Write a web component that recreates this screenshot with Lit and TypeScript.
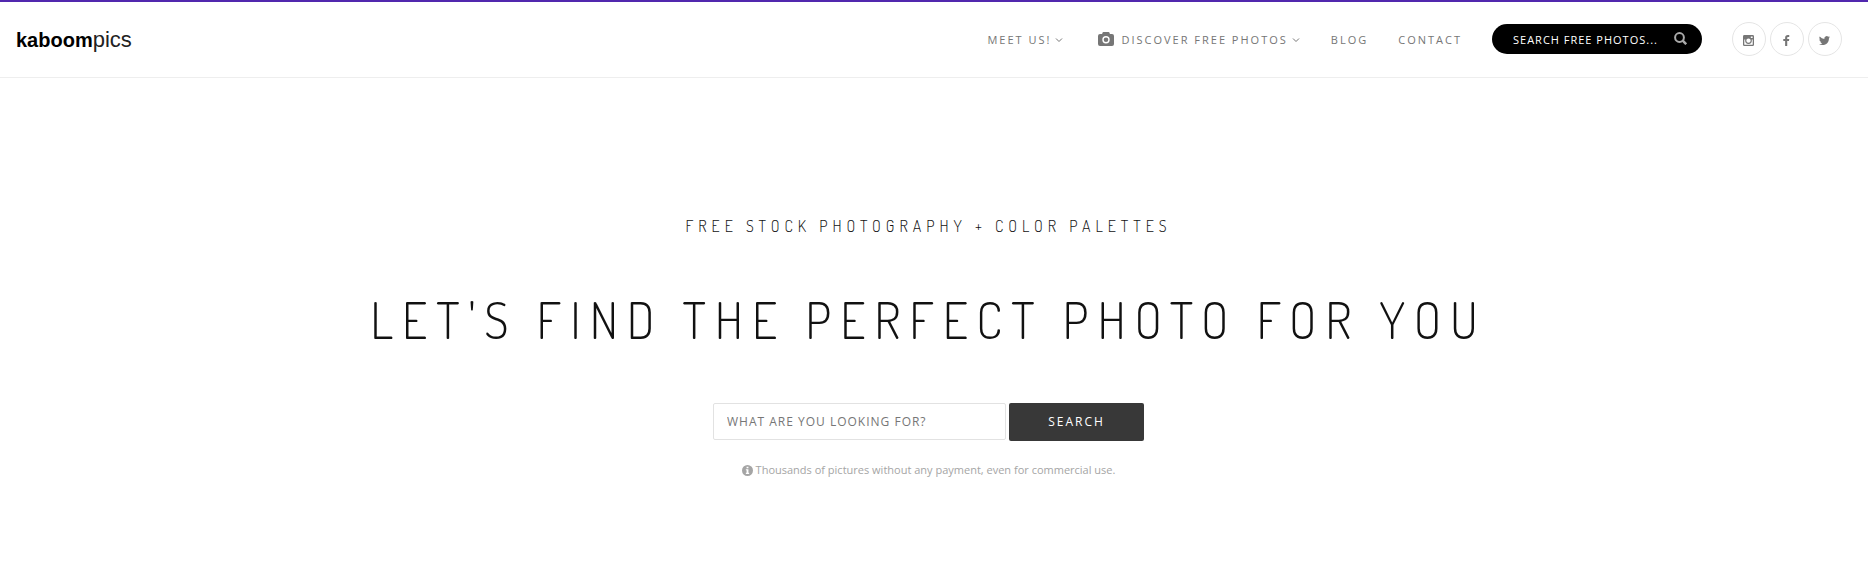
import { LitElement, html, css, svg } from "lit";
import { customElement } from "lit/decorators.js";

const chevron = html`<svg class="chevron" viewBox="0 0 8 8" aria-hidden="true">
  <path d="M1 2.5 4 5.5 7 2.5" fill="none" stroke="currentColor" />
</svg>`;

const socials = [
  {
    name: "Instagram",
    glyph: svg`<path fill-rule="evenodd" d="M1.5 0h9A1.5 1.5 0 0 1 12 1.500v9a1.500 1.500 0 0 1-1.500 1.500h-9A1.500 1.500 0 0 1 0 10.500v-9A1.500 1.500 0 0 1 1.500 0ZM1.400 5v5a.6.6 0 0 0 .6.6h8a.6.6 0 0 0 .6-.6V5H9.500a3.700 3.700 0 1 1-7 0ZM8.500 1.600v1.800h2V1.600ZM6 3.700a2.400 2.400 0 1 0 0 4.800 2.400 2.400 0 0 0 0-4.800Z"/>`,
  },
  {
    name: "Facebook",
    glyph: svg`<path d="M9 .1v2H7.800c-.8 0-1 .4-1 1v1.300H9l-.3 2.100H6.800V12H4.500V6.500h-2V4.400h2V2.800C4.500.9 5.700 0 7.400 0 8.200 0 8.800.1 9 .1Z"/>`,
  },
  {
    name: "Twitter",
    glyph: svg`<path d="M12 2.500a5 5 0 0 1-1.200 1.200C11 7.500 8.300 11 4 11a7 7 0 0 1-4-1.100 5 5 0 0 0 3.600-1A2.500 2.500 0 0 1 1.300 7.200h1.100A2.500 2.500 0 0 1 .4 4.700l1.100.3A2.500 2.500 0 0 1 .8 1.700 7 7 0 0 0 5.900 4.300 2.500 2.500 0 0 1 10.100 2l1.600-.6-1.100 1.400Z"/>`,
  },
];

@customElement("app-root")
export class AppRoot extends LitElement {
  static styles = css`
    :host {
      display: block;
      font-family: "Open Sans", sans-serif;
      color: #767676;
      background: #fff;
    }
    a {
      color: inherit;
      text-decoration: none;
    }
    .header {
      display: flex;
      align-items: center;
      justify-content: space-between;
      padding: 20px 26px 21px 16px;
      border-top: 2px solid #5128ae;
      border-bottom: 1px solid #eee;
    }
    .logo {
      padding-top: 2px;
      font: 22px/32px "Liberation Sans", sans-serif;
      color: #222;
    }
    .logo b {
      font-size: 20px;
      color: #000;
    }
    .menu {
      display: flex;
      align-items: center;
    }
    .nav {
      display: flex;
      gap: 30px;
      margin-right: 30px;
      padding-top: 2px;
      font-size: 11px;
      line-height: 20px;
      letter-spacing: 2px;
    }
    .nav a {
      display: flex;
      align-items: center;
    }
    .chevron {
      width: 8px;
      height: 8px;
      margin: 0 1px 0 4px;
    }
    .camera {
      width: 16px;
      height: 14px;
      margin: 0 7px 2px 4px;
    }
    .quick {
      display: flex;
      align-items: center;
      box-sizing: border-box;
      width: 210px;
      height: 30px;
      margin-right: 30px;
      padding: 0 15px 0 21px;
      border-radius: 15px;
      background: #000;
    }
    .quick input {
      flex: 1;
      min-width: 0;
      padding: 2px 0 0;
      border: 0;
      outline: 0;
      background: none;
      color: #fff;
      font: 500 11px/20px "Open Sans", sans-serif;
      letter-spacing: 1px;
    }
    .quick input::placeholder {
      color: #fff;
      opacity: 1;
    }
    .quick button {
      display: flex;
      padding: 0 0 2px;
      border: 0;
      background: none;
      color: #aaa;
    }
    .quick svg {
      width: 13px;
      height: 13px;
    }
    .socials {
      display: flex;
      gap: 4px;
    }
    .socials a {
      display: grid;
      place-items: center;
      box-sizing: border-box;
      width: 34px;
      height: 34px;
      padding: 2px 1px 0 0;
      border: 1px solid #e5e5e5;
      border-radius: 50%;
    }
    .socials svg {
      width: 11px;
      height: 11px;
      fill: currentColor;
    }
    .hero {
      display: flex;
      flex-direction: column;
      align-items: center;
      padding: 136px 11px 80px 0;
      text-align: center;
    }
    .tagline,
    .title {
      margin: 0;
      color: #111;
      font-family: Dosis, "Liberation Sans Narrow", Roboto, sans-serif;
      font-weight: 300;
      text-transform: uppercase;
    }
    .tagline {
      font-size: 16px;
      line-height: 24px;
      letter-spacing: 5px;
    }
    .title {
      margin-top: 40px;
      font-size: 50px;
      line-height: 84px;
      letter-spacing: 9px;
    }
    .search {
      display: flex;
      align-items: flex-start;
      gap: 3px;
      margin-top: 41px;
    }
    .search input {
      box-sizing: border-box;
      width: 293px;
      height: 37px;
      padding: 0 13px;
      border: 1px solid #e2e2e2;
      border-radius: 2px;
      color: #767676;
      font: 12px/20px "Open Sans", sans-serif;
      letter-spacing: 1px;
    }
    .search input::placeholder {
      color: #767676;
      opacity: 1;
    }
    .search button {
      width: 135px;
      height: 38px;
      padding: 0;
      border: 0;
      border-radius: 2px;
      background: #383838;
      color: #fff;
      font: 500 12px/20px "Open Sans", sans-serif;
      letter-spacing: 2px;
    }
    .note {
      display: flex;
      align-items: center;
      gap: 3px;
      margin: 20px 0 0;
      color: #a5a5a5;
      font-size: 11px;
      line-height: 18px;
    }
    .note svg {
      width: 11px;
      height: 11px;
    }
  `;

  render() {
    return html`
      <header class="header">
        <a class="logo" href="#"><b>kaboom</b>pics</a>
        <div class="menu">
          <nav class="nav">
            <a href="#">MEET US!${chevron}</a>
            <a href="#">
              <svg class="camera" viewBox="0 0 16 14" fill="currentColor" aria-hidden="true">
                <path fill-rule="evenodd" d="M5.500 0h5a1 1 0 0 1 1 .7l.4 1.300H14a2 2 0 0 1 2 2v8a2 2 0 0 1-2 2H2a2 2 0 0 1-2-2V4a2 2 0 0 1 2-2h2.100l.4-1.300a1 1 0 0 1 1-.7ZM8 4a3.700 3.700 0 1 0 0 7.400A3.700 3.700 0 0 0 8 4Zm0 1.400a2.300 2.300 0 1 1 0 4.600 2.300 2.300 0 0 1 0-4.600Z" />
              </svg>
              DISCOVER FREE PHOTOS${chevron}
            </a>
            <a href="#">BLOG</a>
            <a href="#">CONTACT</a>
          </nav>
          <form class="quick" role="search">
            <input type="text" aria-label="Search free photos" placeholder="SEARCH FREE PHOTOS..." />
            <button type="button" aria-label="Search">
              <svg viewBox="0 0 13 13" fill="none" stroke="currentColor" stroke-width="2" aria-hidden="true">
                <circle cx="5.500" cy="5.500" r="4.400" />
                <path d="m8.700 8.700 3.500 3.500" stroke-width="2.500" />
              </svg>
            </button>
          </form>
          <div class="socials">
            ${socials.map(
              (s) => html`<a href="#" aria-label=${s.name}><svg viewBox="0 0 12 12" aria-hidden="true">${s.glyph}</svg></a>`
            )}
          </div>
        </div>
      </header>
      <main class="hero">
        <h2 class="tagline">Free stock photography + color palettes</h2>
        <h1 class="title">Let's find the perfect photo for you</h1>
        <form class="search">
          <input type="text" aria-label="What are you looking for?" placeholder="WHAT ARE YOU LOOKING FOR?" />
          <button type="button">SEARCH</button>
        </form>
        <p class="note">
          <svg viewBox="0 0 12 12" fill="currentColor" aria-hidden="true">
            <path fill-rule="evenodd" d="M6 0a6 6 0 1 1 0 12A6 6 0 0 1 6 0ZM5 1.800v1.700h2V1.800ZM4.200 4.600v1.200H5v2.700h-.8v1.300h3.600V8.500H7V4.600Z" />
          </svg>
          Thousands of pictures without any payment, even for commercial use.
        </p>
      </main>
    `;
  }
}
